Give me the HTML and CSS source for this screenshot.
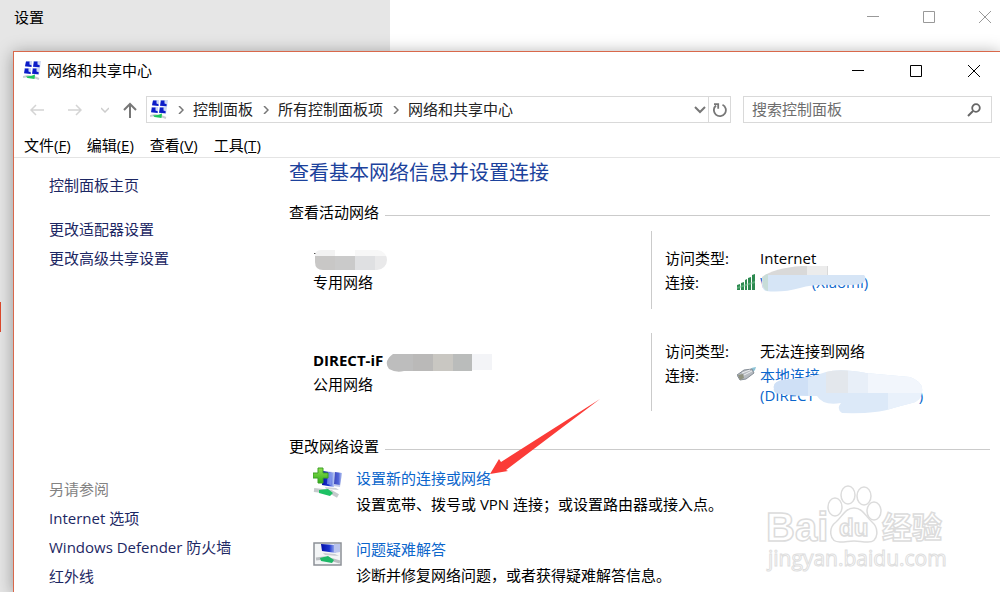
FILE: index.html
```html
<!DOCTYPE html>
<html lang="zh-CN">

<head>
    <meta charset="utf-8">
    <title>网络和共享中心</title>
    <link rel="stylesheet" href="styles.css">
</head>

<body>

    <!-- shared icons -->
    <svg class="defs" width="0" height="0" aria-hidden="true">
        <defs>
            <linearGradient id="screen" x1="0" y1="0" x2="1" y2="0">
                <stop offset="0" stop-color="#0410a8" />
                <stop offset="0.55" stop-color="#1c35d0" />
                <stop offset="1" stop-color="#b9cbf5" />
            </linearGradient>
            <linearGradient id="plus" x1="0" y1="0" x2="0" y2="1">
                <stop offset="0" stop-color="#8fe04e" />
                <stop offset="1" stop-color="#2fae1c" />
            </linearGradient>
            <symbol id="net" viewBox="0 0 18 19">
                <path d="M3 0h6v6l-7-.5zM10 0h8l-1 7-7-1zM1 7h7v6l-7-1zM9 7h8l-1 7-7-1z" fill="#cdd8f5" />
                <path d="M3 .5h3.500v3l2 .8v1.700L2 5.300zM11 .5h3.500v3l2.200.8-.2 2L10 5.800zM2 7.500h3.500v3l2.200.8v1.700L1 12.200zM10 7.500h3.500v3l2.200.8-.2 2L9 12.800z" fill="#0b1cc8" />
                <path d="M0 16l5-1 6 1 5 2" stroke="#c9ced2" stroke-width="2" fill="none" />
                <path d="M3 15.500l5-.5 4-1.500-.5 4.500-7-1z" fill="#1fc65c" />
            </symbol>
            <symbol id="min" viewBox="0 0 12 12">
                <path d="M0 5.500h12" stroke="currentColor" fill="none" />
            </symbol>
            <symbol id="max" viewBox="0 0 12 12">
                <path d="M.5.500h11v11h-11z" stroke="currentColor" fill="none" />
            </symbol>
            <symbol id="close" viewBox="0 0 12 12">
                <path d="M0 0l12 12M12 0L0 12" stroke="currentColor" fill="none" />
            </symbol>
            <symbol id="sep" viewBox="0 0 6 8">
                <path d="M1 0l4 4-4 4" stroke="#777" stroke-width="1.500" fill="none" />
            </symbol>
        </defs>
    </svg>

    <div class="desktop">

        <div class="settings">
            <div class="settingsTitle">设置</div>
            <div class="settingsBar">
                <div class="controls">
                    <button aria-label="最小化"><svg width="12" height="12"><use href="#min" /></svg></button>
                    <button aria-label="最大化"><svg width="12" height="12"><use href="#max" /></svg></button>
                    <button aria-label="关闭"><svg width="12" height="12"><use href="#close" /></svg></button>
                </div>
            </div>
        </div>
        <div class="settingsMark"></div>

        <div class="window">

            <div class="titleBar">
                <svg width="18" height="19"><use href="#net" /></svg>
                <span class="titleText">网络和共享中心</span>
                <div class="controls">
                    <button aria-label="最小化"><svg width="12" height="12"><use href="#min" /></svg></button>
                    <button aria-label="最大化"><svg width="12" height="12"><use href="#max" /></svg></button>
                    <button aria-label="关闭"><svg width="12" height="12"><use href="#close" /></svg></button>
                </div>
            </div>

            <div class="navBar">
                <button class="navBut" aria-label="后退">
                    <svg width="14" height="12" viewBox="0 0 14 12"><path d="M14 6H1M6 1L1 6l5 5" stroke="#d4d4d4" stroke-width="1.500" fill="none" /></svg>
                </button>
                <button class="navBut" aria-label="前进">
                    <svg width="14" height="12" viewBox="0 0 14 12"><path d="M0 6h13M8 1l5 5-5 5" stroke="#d4d4d4" stroke-width="1.500" fill="none" /></svg>
                </button>
                <button class="navBut recent" aria-label="最近浏览的位置">
                    <svg width="8" height="6" viewBox="0 0 8 6"><path d="M0 1l4 4 4-4" stroke="#ccc" stroke-width="1.500" fill="none" /></svg>
                </button>
                <button class="navBut up" aria-label="上移">
                    <svg width="14" height="16" viewBox="0 0 14 16"><path d="M7 16V2M1 8l6-6 6 6" stroke="#777" stroke-width="2" fill="none" /></svg>
                </button>
                <div class="address">
                    <svg width="18" height="19"><use href="#net" /></svg>
                    <span class="sep"><svg width="6" height="8"><use href="#sep" /></svg></span>
                    <a href="#">控制面板</a>
                    <span class="sep"><svg width="6" height="8"><use href="#sep" /></svg></span>
                    <a href="#">所有控制面板项</a>
                    <span class="sep"><svg width="6" height="8"><use href="#sep" /></svg></span>
                    <a href="#">网络和共享中心</a>
                    <button class="history" aria-label="以前的位置">
                        <svg width="12" height="8" viewBox="0 0 12 8"><path d="M1 1l5 5 5-5" stroke="#777" stroke-width="2" fill="none" /></svg>
                    </button>
                    <button class="refresh" aria-label="刷新">
                        <svg width="14" height="14" viewBox="0 0 14 14"><path d="M9.500 1.700a6 6 0 1 1-6.500.8M1 1.200h4.200v4.500" stroke="#777" stroke-width="1.800" fill="none" /></svg>
                    </button>
                </div>
                <div class="search">
                    <input type="text" placeholder="搜索控制面板" aria-label="搜索控制面板">
                    <button aria-label="搜索">
                        <svg width="14" height="14" viewBox="0 0 14 14"><circle cx="9" cy="5" r="3.800" stroke="#666" stroke-width="1.800" fill="none" /><path d="M6 8l-5 5" stroke="#666" stroke-width="2" /></svg>
                    </button>
                </div>
            </div>

            <div class="menuBar">
                <button>文件(<u>F</u>)</button>
                <button>编辑(<u>E</u>)</button>
                <button>查看(<u>V</u>)</button>
                <button>工具(<u>T</u>)</button>
            </div>

            <div class="content">

                <div class="sidebar">
                    <a class="home" href="#">控制面板主页</a>
                    <a href="#">更改适配器设置</a>
                    <a href="#">更改高级共享设置</a>
                    <div class="seeAlso">
                        <span>另请参阅</span>
                        <a href="#">Internet 选项</a>
                        <a href="#">Windows Defender 防火墙</a>
                        <a href="#">红外线</a>
                    </div>
                </div>

                <div class="main">
                    <h1>查看基本网络信息并设置连接</h1>

                    <h2>查看活动网络</h2>

                    <div class="network">
                        <div class="networkName">
                            <b>&nbsp;</b>
                            <span>专用网络</span>
                            <svg class="maskName" width="74" height="22" viewBox="0 0 74 22">
                                <clipPath id="c1"><path d="M8 2h56a10 10 0 0 1 0 20H10q-8 0-8-8V8q0-6 6-6z" /></clipPath>
                                <path d="M1 5h2v1H1z" fill="#555" />
                                <g clip-path="url(#c1)">
                                    <path d="M0 2h22v6H0z" fill="#f2f2f2" />
                                    <path d="M22 2h20v6H22z" fill="#fefefe" />
                                    <path d="M42 2h32v6H42z" fill="#f7f7f7" />
                                    <path d="M0 8h22v14H0z" fill="#c8c7c6" />
                                    <path d="M22 8h20v14H22z" fill="#cacaca" />
                                    <path d="M42 8h20v14H42z" fill="#dfe0e2" />
                                    <path d="M62 8h12v14H62z" fill="#e9e9ea" />
                                </g>
                            </svg>
                        </div>
                        <div class="networkInfo">
                            <span class="label">访问类型:</span>
                            <span class="value">Internet</span>
                            <span class="label">连接:</span>
                            <svg width="19" height="16" viewBox="0 0 19 16">
                                <path d="M0 11l3-1v6H0zM4 9l3-1v8H4zM8 6l2-1v11H8zM11 4l3-1v13h-3zM15 1l3-1v16h-3z" fill="#2d8a50" />
                                <path d="M0 13l18-6v2L0 15z" fill="#7fc79a" opacity=".5" />
                            </svg>
                            <a href="#">W<span class="gapWifi"></span>(Xiaomi)</a>
                            <svg class="maskWifi" width="110" height="28" viewBox="0 0 110 28">
                                <path d="M2 11Q14 2 42 0h26v14H2z" fill="#d9d9d9" />
                                <path d="M47 0h20v10H47z" fill="#ececec" />
                                <path d="M2 15Q4 8 10 9h94q3 3 0 7-4 4-30 3-20-1-34 3Q22 27 6 25q-5-2-4-10z" fill="#d6e5f6" />
                                <path d="M3 12q2-4 5-4v17q-7-2-5-13z" fill="#c8ddd8" />
                            </svg>
                        </div>
                    </div>

                    <div class="network">
                        <div class="networkName">
                            <b>DIRECT-iF</b>
                            <span>公用网络</span>
                            <svg class="maskDirect" width="108" height="20" viewBox="0 0 108 20">
                                <path d="M8 1h20v17h-9q-8 2-15-2-6-8 4-15z" fill="#bdbdbd" />
                                <path d="M28 1h20v17H28z" fill="#bab9b8" />
                                <path d="M48 1h20v17H48z" fill="#c9c7c2" />
                                <path d="M68 1h19v17H68z" fill="#babcbb" />
                                <path d="M87 1h20v16H87z" fill="#f3f4f7" />
                            </svg>
                        </div>
                        <div class="networkInfo">
                            <span class="label">访问类型:</span>
                            <span class="value">无法连接到网络</span>
                            <span class="label">连接:</span>
                            <svg width="19" height="14" viewBox="0 0 19 14">
                                <path d="M12 3q3-3 7-3l-1 3-4 4z" fill="#8cc3d6" />
                                <path d="M0 8l7-5 8-1 2 4-8 6-6 1z" fill="#b6bbc1" stroke="#858d96" />
                                <path d="M5 6l8-3M7 8l8-4" stroke="#eceef0" />
                                <path d="M1 8l5-1 1 4-4 2z" fill="#8f9280" />
                            </svg>
                            <a class="direct" href="#">本地连接<br>(DIRECT<span class="gapDirect"></span>)</a>
                            <svg class="maskLan" width="152" height="46" viewBox="0 0 152 46">
                                <clipPath id="c2"><path d="M2 20Q0 12 12 11q26-2 42-8 14-4 40 1l44 4q14 5 12 15-1 9-10 11-12 3-22 6-14 5-48 4-6-4-1-10-18 3-24-7-28 0-41-3-3-3-2-4z" /></clipPath>
                                <g clip-path="url(#c2)">
                                    <path d="M0 0h152v46H0z" fill="#dce9f8" />
                                    <path d="M0 0h36v46H0z" fill="#cfe0f6" />
                                    <path d="M54 0h22v24H54z" fill="#e3e7ec" />
                                    <path d="M76 0h20v24H76z" fill="#e8eff8" />
                                    <path d="M96 0h56v24H96z" fill="#f2f6fc" />
                                    <path d="M116 24h36v22h-36z" fill="#e9f1fb" />
                                </g>
                            </svg>
                        </div>
                    </div>

                    <h2>更改网络设置</h2>

                    <div class="task">
                        <svg width="30" height="32" viewBox="0 0 30 32">
                            <path d="M11 4l18 2-2 14-15-2z" fill="#c3cbea" />
                            <path d="M22 5l7 1-2 12-6-1z" fill="url(#screen)" opacity=".7" />
                            <path d="M10 4l11 2v14l-12-2z" fill="url(#screen)" />
                            <path d="M15 5l4 1-1 12-4-1z" fill="#8fa4f0" opacity=".7" />
                            <path d="M12 20l11 1 3 2-13-1z" fill="#cdd1d8" />
                            <path d="M1 23l9 1 8 1 7 4" stroke="#c5cacc" stroke-width="4" fill="none" />
                            <path d="M6 23l9-1 5 4-3 3-11-3z" fill="#1ec164" />
                            <path d="M5 1h5v5h5v5h-5v5H5v-5H0V6h5z" fill="url(#plus)" stroke="#3da026" />
                        </svg>
                        <div class="taskText">
                            <a href="#">设置新的连接或网络</a>
                            <span>设置宽带、拨号或 VPN 连接；或设置路由器或接入点。</span>
                        </div>
                    </div>

                    <div class="task">
                        <svg width="30" height="32" viewBox="0 0 30 32">
                            <path d="M1 5h27v22H1z" fill="#f3f5f6" stroke="#8c9096" stroke-width="1.500" />
                            <path d="M8 6l15 1v8l-14-2z" fill="url(#screen)" />
                            <path d="M21 6h6v8l-6 1z" fill="#b9c3ec" />
                            <path d="M10 15l12 1 4 2-14-1z" fill="#c9ccd2" />
                            <path d="M3 21l8-1 9 2 7 2" stroke="#b9bdc0" stroke-width="3" fill="none" />
                            <path d="M7 20l8-2 6 4-2 3-11-2z" fill="#1db866" />
                        </svg>
                        <div class="taskText">
                            <a href="#">问题疑难解答</a>
                            <span>诊断并修复网络问题，或者获得疑难解答信息。</span>
                        </div>
                    </div>

                    <!-- pointer to the first task -->
                    <svg class="arrow" width="112" height="78" viewBox="0 0 112 78">
                        <path d="M111 1L17 72l2 1L1 76l9-15 2 3z" fill="#fb3b37" />
                    </svg>
                </div>
            </div>
        </div>

        <svg class="watermark" width="190" height="96" viewBox="0 0 190 96">
            <g fill="#fff" stroke="#dcdcdc" stroke-width="1.500">
                <text class="wmBig" x="3" y="60">Bai</text>
                <ellipse cx="72" cy="26" rx="7" ry="9" />
                <ellipse cx="85" cy="14" rx="7" ry="9" />
                <ellipse cx="101" cy="15" rx="7" ry="9" />
                <ellipse cx="111" cy="30" rx="7" ry="9" />
                <path d="M91 27c9 0 12 9 18 14 7 6 7 20-4 20-6 0-9-1-14-1s-8 1-14 1c-11 0-12-14-4-20 6-5 9-14 18-14z" />
                <text class="wmDu" x="76" y="55">du</text>
                <text class="wmCjk" x="119" y="57">经验</text>
            </g>
            <text class="wmUrl" x="5" y="85">jingyan.baidu.com</text>
        </svg>
    </div>

</body>

</html>
```
FILE: styles.css
```css
body {
    margin: 0;
    padding: 0;
    color: #000;
    font-family: "Open Sans", "Noto Sans CJK SC", sans-serif;
    font-size: 15px;
    line-height: 22px;
}

a {
    color: #0b66cc;
    text-decoration: none;
}

svg {
    display: block;
    flex: none;
}

button {
    margin: 0;
    padding: 0;
    border: 0;
    background: none;
    color: inherit;
    font: inherit;
    display: flex;
    align-items: center;
    justify-content: center;
}

.defs {
    position: absolute;
}

.desktop {
    position: relative;
    display: flex;
    flex-direction: column;
    min-height: 100vh;
    overflow: hidden;
    background-color: #e6e6e6;
}

/* settings window behind */

.settings {
    display: flex;
    height: 51px;
}

.settingsTitle {
    width: 376px;
    padding: 6px 0 0 14px;
}

.settingsBar {
    flex: 1;
    display: flex;
    align-items: flex-start;
    justify-content: flex-end;
    padding: 11px 9px 0 0;
    background-color: white;
    color: #999;
}

.settingsMark {
    position: absolute;
    left: 0;
    top: 302px;
    width: 1px;
    height: 30px;
    background-color: #d9472b;
}

.controls {
    display: flex;
    gap: 44px;
}

/* network center window */

.window {
    flex: 1;
    display: flex;
    flex-direction: column;
    margin-left: 13px;
    border-top: 1px solid #d9684b;
    border-left: 1px solid #d9684b;
    background-color: white;
    box-shadow: 0 2px 16px rgba(0, 0, 0, 0.35);
}

.titleBar {
    display: flex;
    align-items: center;
    height: 37px;
    padding: 0 20px 0 9px;
}

.titleText {
    flex: 1;
    margin-left: 6px;
    padding-bottom: 2px;
}

.titleBar .controls {
    gap: 46px;
}

.navBar {
    display: flex;
    height: 27px;
    padding: 7px 8px 0 4px;
}

.navBut {
    width: 38px;
}

.recent {
    width: 22px;
}

.up {
    width: 28px;
    margin-right: 2px;
}

.address,
.search {
    display: flex;
    align-items: center;
    box-sizing: border-box;
    border: 1px solid #d9d9d9;
}

.address {
    flex: 1;
    padding-left: 3px;
}

.address a {
    padding-bottom: 2px;
    color: #222;
    white-space: nowrap;
}

.sep {
    display: flex;
    justify-content: center;
    width: 25px;
}

.history {
    width: 17px;
    margin-left: auto;
}

.refresh {
    width: 22px;
    height: 25px;
    border-left: 1px solid #d9d9d9;
}

.search {
    width: 249px;
    margin-left: 12px;
    padding: 0 10px 0 8px;
}

.search input {
    flex: 1;
    min-width: 0;
    padding: 0 0 2px;
    border: 0;
    outline: 0;
    background: none;
    font: inherit;
}

.search input::placeholder {
    color: #6d6d6d;
    opacity: 1;
}

.menuBar {
    display: flex;
    gap: 16px;
    padding: 11px 0 1px 10px;
    border-bottom: 1px solid #e4e4e4;
}

.menuBar button {
    display: block;
}

.content {
    flex: 1;
    display: flex;
}

/* left links */

.sidebar {
    display: flex;
    flex-direction: column;
    gap: 7px;
    box-sizing: border-box;
    width: 275px;
    padding: 16px 0 5px 35px;
}

.sidebar a {
    color: #1c2763;
}

.sidebar .home {
    margin-bottom: 15px;
}

.seeAlso {
    display: flex;
    flex-direction: column;
    gap: 7px;
    margin-top: auto;
    color: #838383;
}

/* right part */

.main {
    position: relative;
    flex: 1;
    padding-right: 10px;
}

h1 {
    margin: 0;
    color: #1c429c;
    font-size: 20px;
    font-weight: normal;
    line-height: 30px;
}

h2 {
    display: flex;
    align-items: center;
    margin: 13px 0 8px;
    font-size: 15px;
    font-weight: normal;
    line-height: 22px;
}

h2::after {
    content: "";
    flex: 1;
    height: 1px;
    margin: 6px 0 0 6px;
    background-color: #cbcbcb;
}

.network {
    display: grid;
    grid-template-columns: minmax(0, 1fr) 339px;
    height: 78px;
    margin: 8px 0 24px;
}

.networkName {
    position: relative;
    display: flex;
    flex-direction: column;
    justify-content: center;
    padding-left: 24px;
    line-height: 24px;
}

.networkInfo {
    position: relative;
    display: grid;
    grid-template-columns: 72px 23px 1fr;
    align-content: center;
    padding-left: 13px;
    border-left: 1px solid #cbcbcb;
    line-height: 24px;
}

.networkInfo > svg {
    margin-top: 4px;
}

.value {
    grid-column: 3;
}

.direct {
    line-height: 20px;
    padding-top: 2px;
}

.gapWifi,
.gapDirect {
    display: inline-block;
    width: 38px;
}

.gapDirect {
    width: 104px;
}

/* smudges over private names */

.maskName {
    position: absolute;
    left: 24px;
    top: 17px;
}

.maskDirect {
    position: absolute;
    left: 96px;
    top: 20px;
}

.networkInfo > .maskWifi {
    position: absolute;
    left: 108px;
    top: 35px;
    margin: 0;
}

.networkInfo > .maskLan {
    position: absolute;
    left: 120px;
    top: 36px;
    margin: 0;
}

.task {
    display: flex;
    gap: 13px;
    margin-bottom: 19px;
    padding-left: 24px;
}

.task > svg {
    margin-top: 2px;
}

.task:last-of-type {
    margin-bottom: 0;
}

.taskText {
    display: flex;
    flex-direction: column;
    line-height: 26px;
}

.arrow {
    position: absolute;
    left: 200px;
    top: 240px;
}

.watermark {
    position: absolute;
    right: 47px;
    bottom: 15px;
}

.wmBig,
.wmDu,
.wmCjk {
    font-family: "Liberation Sans", "Noto Sans CJK SC", sans-serif;
    font-size: 40px;
    font-weight: bold;
}

.wmDu {
    font-size: 24px;
}

.wmCjk {
    font-size: 30px;
}

.wmUrl {
    font-size: 21px;
    fill: #fff;
    stroke: #dedede;
    stroke-width: 1px;
}
```
